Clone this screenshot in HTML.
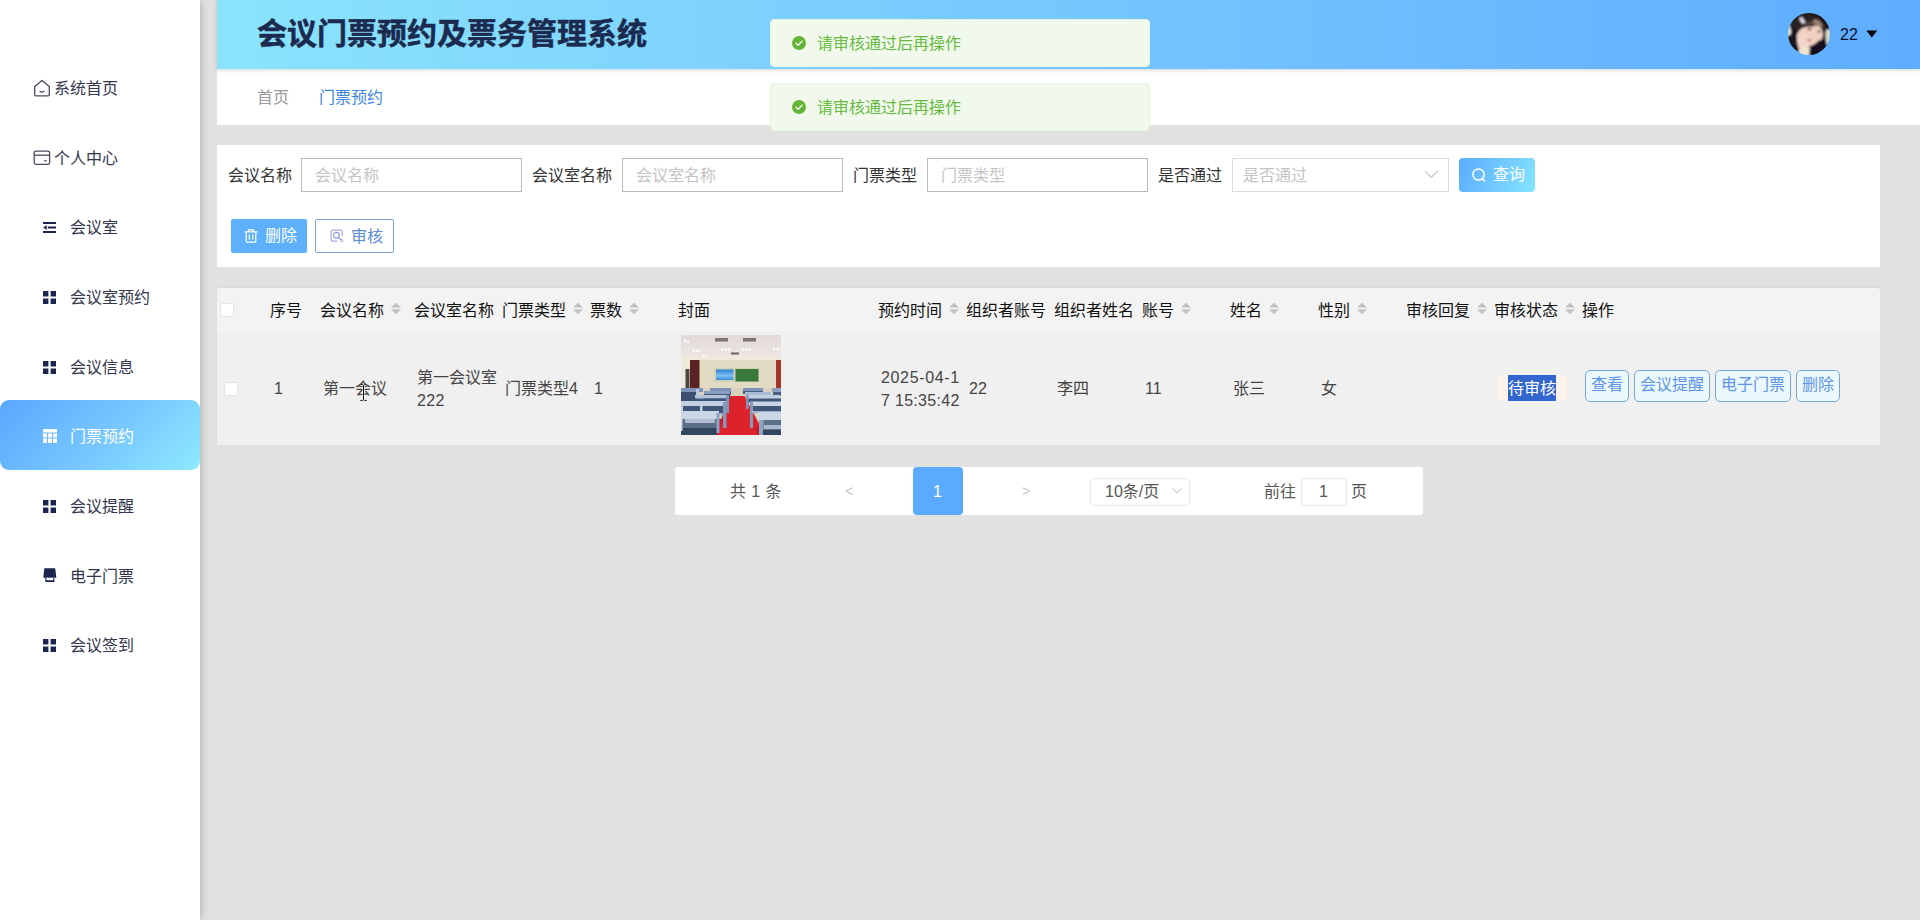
<!DOCTYPE html>
<html lang="zh-CN">
<head>
<meta charset="utf-8">
<title>会议门票预约及票务管理系统</title>
<style>
*{box-sizing:border-box;margin:0;padding:0}
html,body{width:1920px;height:920px;overflow:hidden}
body{background:#e1e1e1;font-family:"Liberation Sans","Noto Sans CJK SC",sans-serif;font-size:16px;color:#333;position:relative}
.abs{position:absolute}
.t{position:absolute;white-space:nowrap;line-height:24px;height:24px;margin-top:1px}
/* sidebar */
#side{position:absolute;left:0;top:0;width:200px;height:920px;background:#fff;box-shadow:0 0 8px rgba(0,0,0,.28);z-index:3}
.mi{position:absolute;left:0;width:200px;height:70px}
.mi .t{color:#333}
#side svg{position:absolute}
#active{position:absolute;left:0;top:400px;width:200px;height:70px;border-radius:9px;background:linear-gradient(135deg,#5aa6ff 0%,#78c8ff 55%,#8ee9ff 100%)}
/* header */
#head{position:absolute;left:217px;top:0;width:1703px;height:69px;background:linear-gradient(90deg,#8ae4fc 0%,#7ed2fd 30%,#6cbcff 70%,#5eadff 100%);box-shadow:0 1px 4px rgba(0,0,0,.18);z-index:2}
#title{left:40px;top:13px;font-size:30px;font-weight:bold;-webkit-text-stroke:.5px #1b2a4e;color:#1b2a4e;line-height:40px;height:40px}
#crumb{position:absolute;left:217px;top:69px;width:1703px;height:56px;background:#fff}
/* toast */
.toast{z-index:10;position:absolute;left:770px;width:380px;height:48px;background:#f0f9eb;border:1px solid #e6f4de;border-radius:4px}
.toast .t{left:46px;top:11px;color:#69ba41}
.toast svg{position:absolute;left:21px;top:16px}
/* search */
#search{position:absolute;left:217px;top:145px;width:1663px;height:122px;background:#fff}
.lab{color:#333}
.inp{position:absolute;top:13px;height:34px;width:221px;border:1px solid #b9b9b9;background:#fff}
.inp .t{left:13px;top:4px;color:#c4c4c4}
.btn{position:absolute;height:34px;border-radius:4px}
/* table */
#table{position:absolute;left:217px;top:288px;width:1663px;height:157px;background:linear-gradient(#f3f3f3 0,#f3f3f3 42px,#f0f0f0 44px,#f0f0f0 100%);border-radius:3px 3px 0 0;box-shadow:0 -1px 2px rgba(0,0,0,.04)}
#table .h{color:#111;top:10px}
#table .d{color:#444;top:88px}
.sort{position:absolute;top:15px;width:8px;height:13px}
.sort:before,.sort:after{content:"";position:absolute;left:0;border:4px solid transparent}
.sort:before{top:-3px;border-bottom:5px solid #c8c8c8}
.sort:after{top:7px;border-top:5px solid #c8c8c8}
.cb{position:absolute;width:14px;height:14px;background:#fff;border:1px solid #e4e4e4;border-radius:2px}
.ob{position:absolute;top:82px;height:32px;border:1px solid #76a6dc;border-radius:5px;background:#ebf9ff;color:#5f95e6;text-align:center;line-height:28px;white-space:nowrap}
/* pager */
#pager{position:absolute;left:675px;top:467px;width:748px;height:48px;background:#fff;border-radius:3px}
#pager .t{color:#555}
</style>
</head>
<body>

<div id="head">
  <div class="t" id="title">会议门票预约及票务管理系统</div>
<svg class="abs" style="left:1571px;top:13px" width="42" height="42" viewBox="0 0 42 42">
    <defs><clipPath id="avc"><circle cx="21" cy="21" r="21"/></clipPath><filter id="ab" x="-10%" y="-10%" width="120%" height="120%"><feGaussianBlur stdDeviation="0.900"/></filter></defs>
    <g clip-path="url(#avc)"><g filter="url(#ab)">
      <rect x="-3" y="-3" width="48" height="48" fill="#1a1517"/>
      <path d="M-2 10l6 0l1 10l-7 4z" fill="#e6e4e2"/>
      <path d="M37 17l6-1v15l-5 1z" fill="#d9d8c9"/>
      <path d="M12 13q6-4 14-2q8 2 9 9q0 8-6 11q-6 4-12 1q-7-4-7-11q0-5 2-8z" fill="#f0cfc1"/>
      <path d="M9 20q4-4 8-2l5 10q-2 6-1 10l-9 0q-4-8-3-18z" fill="#f3d6c9"/>
      <path d="M11 35.500l11-1.500l0 10H10z" fill="#eee5d3"/>
      <path d="M5 9q7-10 20-7q12 3 13 15l-2 10q-1-12-5-15q-6 2-13 2q-6 1-8 6q-3 3-3 8q-3-9-7-19z" fill="#2b2123"/>
      <path d="M3 12q3 2 6 8q-2 10 2 18l-8 2z" fill="#18121a"/>
      <path d="M27 6q6 1 8 8l-6-1q-3-3-6-3z" fill="#9a8272"/>
      <path d="M17 9q5-1 9 1l-6 3z" fill="#5a4848"/>
      <path d="M11 5.500l3-1.500l3.500 5.500l-3 1.500z" fill="#e8e6f3"/>
      <path d="M22 33q6-2 9-6l7 0l2 18H21z" fill="#14101a"/>
      <ellipse cx="21.500" cy="16.200" rx="1.900" ry="1.100" fill="#4a2c2c"/><ellipse cx="31" cy="18.600" rx="1.600" ry="1" fill="#4a2c2c"/>
      <ellipse cx="21" cy="27.300" rx="2.300" ry="1.300" fill="#d67a7c"/>
    </g></g>
  </svg>
  <div class="t" style="left:1623px;top:22px;color:#0a1030">22</div>
  <svg class="abs" style="left:1649px;top:30px" width="12" height="8" viewBox="0 0 12 8"><path d="M0.3 0.5h11L5.8 7.6z" fill="#050510"/></svg>
</div>

<div id="crumb">
  <div class="t" style="left:40px;top:16px;color:#999">首页</div>
  <div class="t" style="left:102px;top:16px;color:#4088de">门票预约</div>
</div>

<div id="side">
  <div id="active"></div>
  <svg width="18" height="18" viewBox="0 0 18 18" style="left:33px;top:79px"><path d="M1.700 7.600L9 1.400l7.300 6.200v8a1.200 1.200 0 0 1-1.200 1.200H2.900a1.200 1.200 0 0 1-1.200-1.200z" fill="none" stroke="#4a4a5e" stroke-width="1.300" stroke-linejoin="round"/><path d="M7 12.300q2 1.500 4 0" fill="none" stroke="#4a4a5e" stroke-width="1.200" stroke-linecap="round"/></svg>
  <div class="t" style="left:54px;top:76px;color:#33364d">系统首页</div>
  <svg width="18" height="16" viewBox="0 0 18 16" style="left:33px;top:150px"><rect x="1.200" y="1.100" width="15.400" height="13.200" rx="1.600" fill="none" stroke="#4a4a5e" stroke-width="1.300"/><path d="M1.200 5.200h15.400" stroke="#4a4a5e" stroke-width="1.300"/><path d="M11 10.800h2.800" stroke="#4a4a5e" stroke-width="1.200"/></svg>
  <div class="t" style="left:54px;top:146px;color:#33364d">个人中心</div>
  <svg width="13" height="11" viewBox="0 0 13 11" style="left:43px;top:222px"><path d="M0 0h13v2H0zM4.700 4.500H13v2H4.700zM0 9h13v2H0zM3.600 3v5L0.200 5.500z" fill="#1c2550"/></svg>
  <div class="t" style="left:70px;top:215px;color:#33364d">会议室</div>
  <svg width="13" height="13" viewBox="0 0 13 13" style="left:43px;top:291px"><path d="M0 0h5.4v5.4H0zM7.6 0H13v5.4H7.6zM0 7.6h5.4V13H0zM7.6 7.6H13V13H7.6z" fill="#1c2550"/></svg>
  <div class="t" style="left:70px;top:285px;color:#33364d">会议室预约</div>
  <svg width="13" height="13" viewBox="0 0 13 13" style="left:43px;top:361px"><path d="M0 0h5.4v5.4H0zM7.6 0H13v5.4H7.6zM0 7.6h5.4V13H0zM7.6 7.6H13V13H7.6z" fill="#1c2550"/></svg>
  <div class="t" style="left:70px;top:355px;color:#33364d">会议信息</div>
  <svg width="14" height="14" viewBox="0 0 14 14" style="left:43px;top:429px"><path d="M0 0h14v3.6H0zM0 4.6h4v4H0zM5 4.6h4v4H5zM10 4.6h4v4h-4zM0 9.6h4V14H0zM5 9.6h4V14H5zM10 9.6h4V14h-4z" fill="#fff"/></svg>
  <div class="t" style="left:70px;top:424px;color:#fff">门票预约</div>
  <svg width="13" height="13" viewBox="0 0 13 13" style="left:43px;top:500px"><path d="M0 0h5.4v5.4H0zM7.6 0H13v5.4H7.6zM0 7.6h5.4V13H0zM7.6 7.6H13V13H7.6z" fill="#1c2550"/></svg>
  <div class="t" style="left:70px;top:494px;color:#33364d">会议提醒</div>
  <svg width="14" height="14" viewBox="0 0 14 14" style="left:43px;top:568px"><path d="M1.300 0.300h10.900l1.100 9q-1.100 1.300-2.200 0q-1.050 1.300-2.100 0q-1.100 1.300-2.200 0q-1.050 1.300-2.100 0q-1.100 1.300-2.200 0q-1.100 1.300-2.200 0z" fill="#1c2550"/><path d="M2.300 9.800v4.100h9.100V9.800h-1.100v2.400H3.400V9.800z" fill="#1c2550"/></svg>
  <div class="t" style="left:70px;top:564px;color:#33364d">电子门票</div>
  <svg width="13" height="13" viewBox="0 0 13 13" style="left:43px;top:639px"><path d="M0 0h5.4v5.4H0zM7.6 0H13v5.4H7.6zM0 7.6h5.4V13H0zM7.6 7.6H13V13H7.6z" fill="#1c2550"/></svg>
  <div class="t" style="left:70px;top:633px;color:#33364d">会议签到</div>
</div>

<div id="search">
  <div class="t lab" style="left:11px;top:18px">会议名称</div>
  <div class="inp" style="left:84px"><div class="t">会议名称</div></div>
  <div class="t lab" style="left:315px;top:18px">会议室名称</div>
  <div class="inp" style="left:405px"><div class="t">会议室名称</div></div>
  <div class="t lab" style="left:636px;top:18px">门票类型</div>
  <div class="inp" style="left:710px"><div class="t">门票类型</div></div>
  <div class="t lab" style="left:941px;top:18px">是否通过</div>
  <div class="inp" style="left:1015px;width:217px;border-color:#dbdbdb"><div class="t" style="left:10px">是否通过</div>
    <svg class="abs" style="left:191px;top:11px" width="15" height="10" viewBox="0 0 15 10"><path d="M1 1.200l6.300 6.300l6.300-6.300" fill="none" stroke="#c0c4cc" stroke-width="1.200"/></svg>
  </div>
  <div class="btn" style="left:1242px;top:13px;width:76px;background:linear-gradient(115deg,#5aacff,#86e4fe)">
    <svg class="abs" style="left:12px;top:9px" width="16" height="16" viewBox="0 0 16 16"><circle cx="7.500" cy="7.500" r="5.600" fill="none" stroke="#fff" stroke-width="1.500"/><path d="M11.500 11.800l2.200 2.200" stroke="#fff" stroke-width="1.500" stroke-linecap="round"/></svg>
    <div class="t" style="left:34px;top:4px;color:#fff">查询</div>
  </div>
  <div class="btn" style="left:14px;top:74px;width:76px;background:#5eb0fb;border-radius:2px">
    <svg class="abs" style="left:12px;top:9px" width="16" height="16" viewBox="0 0 16 16"><path d="M1.500 3.800h13M5.500 3.600V1.800h5v1.800M3.200 4v9.200a1 1 0 0 0 1 1h7.600a1 1 0 0 0 1-1V4M6.300 6.500v5.300M9.700 6.500v5.300" fill="none" stroke="#fff" stroke-width="1.200"/></svg>
    <div class="t" style="left:34px;top:4px;color:#fff">删除</div>
  </div>
  <div class="btn" style="left:98px;top:74px;width:79px;background:#fff;border:1px solid #7ea6dd;border-radius:2px">
    <svg class="abs" style="left:13px;top:8px" width="16" height="16" viewBox="0 0 16 16"><path d="M13.200 7.500V3.800a1.700 1.700 0 0 0-1.700-1.700H3.800a1.700 1.700 0 0 0-1.700 1.700v7.700a1.700 1.700 0 0 0 1.700 1.700h4.400" fill="none" stroke="#a9a6e2" stroke-width="1.200"/><circle cx="7.400" cy="7.300" r="2.900" fill="none" stroke="#8d9be6" stroke-width="1.200"/><path d="M9.600 9.600l2.300 2.300" stroke="#8d9be6" stroke-width="1.200"/><circle cx="12.700" cy="12.700" r="1.200" fill="none" stroke="#a9a6e2" stroke-width="1"/></svg>
    <div class="t" style="left:35px;top:4px;color:#5a8cd8">审核</div>
  </div>
</div>
<div id="table">
  <div class="cb" style="left:3px;top:15px"></div>
  <div class="cb" style="left:7px;top:94px"></div>
  <div class="t h" style="left:53px">序号</div>
  <div class="t h" style="left:103px">会议名称</div>
  <svg class="abs" style="left:174px;top:14px" width="10" height="13" viewBox="0 0 10 13"><path d="M0 5.500L5 0.500l5 5zM0 7.200h10l-5 5z" fill="#c2c2c2"/></svg>
  <div class="t h" style="left:197px">会议室名称</div>
  <div class="t h" style="left:285px">门票类型</div>
  <svg class="abs" style="left:356px;top:14px" width="10" height="13" viewBox="0 0 10 13"><path d="M0 5.500L5 0.500l5 5zM0 7.200h10l-5 5z" fill="#c2c2c2"/></svg>
  <div class="t h" style="left:373px">票数</div>
  <svg class="abs" style="left:412px;top:14px" width="10" height="13" viewBox="0 0 10 13"><path d="M0 5.500L5 0.500l5 5zM0 7.200h10l-5 5z" fill="#c2c2c2"/></svg>
  <div class="t h" style="left:461px">封面</div>
  <div class="t h" style="left:661px">预约时间</div>
  <svg class="abs" style="left:732px;top:14px" width="10" height="13" viewBox="0 0 10 13"><path d="M0 5.500L5 0.500l5 5zM0 7.200h10l-5 5z" fill="#c2c2c2"/></svg>
  <div class="t h" style="left:749px">组织者账号</div>
  <div class="t h" style="left:837px">组织者姓名</div>
  <div class="t h" style="left:925px">账号</div>
  <svg class="abs" style="left:964px;top:14px" width="10" height="13" viewBox="0 0 10 13"><path d="M0 5.500L5 0.500l5 5zM0 7.200h10l-5 5z" fill="#c2c2c2"/></svg>
  <div class="t h" style="left:1013px">姓名</div>
  <svg class="abs" style="left:1052px;top:14px" width="10" height="13" viewBox="0 0 10 13"><path d="M0 5.500L5 0.500l5 5zM0 7.200h10l-5 5z" fill="#c2c2c2"/></svg>
  <div class="t h" style="left:1101px">性别</div>
  <svg class="abs" style="left:1140px;top:14px" width="10" height="13" viewBox="0 0 10 13"><path d="M0 5.500L5 0.500l5 5zM0 7.200h10l-5 5z" fill="#c2c2c2"/></svg>
  <div class="t h" style="left:1189px">审核回复</div>
  <svg class="abs" style="left:1260px;top:14px" width="10" height="13" viewBox="0 0 10 13"><path d="M0 5.500L5 0.500l5 5zM0 7.200h10l-5 5z" fill="#c2c2c2"/></svg>
  <div class="t h" style="left:1277px">审核状态</div>
  <svg class="abs" style="left:1348px;top:14px" width="10" height="13" viewBox="0 0 10 13"><path d="M0 5.500L5 0.500l5 5zM0 7.200h10l-5 5z" fill="#c2c2c2"/></svg>
  <div class="t h" style="left:1365px">操作</div>
  <div class="t d" style="left:57px;top:88px">1</div>
  <div class="t d" style="left:106px;top:88px">第一会议</div>
  <div class="t d" style="left:200px;top:77px">第一会议室</div>
  <div class="t d" style="left:200px;top:100px;letter-spacing:.4px">222</div>
  <div class="t d" style="left:288px;top:88px">门票类型4</div>
  <div class="t d" style="left:377px;top:88px">1</div>
  <div class="t d" style="left:664px;top:77px;letter-spacing:.65px">2025-04-1</div>
  <div class="t d" style="left:664px;top:100px;letter-spacing:.3px">7 15:35:42</div>
  <div class="t d" style="left:752px;top:88px">22</div>
  <div class="t d" style="left:840px;top:88px">李四</div>
  <div class="t d" style="left:928px;top:88px">11</div>
  <div class="t d" style="left:1016px;top:88px">张三</div>
  <div class="t d" style="left:1104px;top:88px">女</div>
  <svg class="abs" style="left:143px;top:96px" width="7" height="17" viewBox="0 0 7 17"><path d="M0.300 0.600h2.400l0.800 0.700l0.800-0.700h2.400M3.500 1.200v14.600M0.300 16.400h2.400l0.800-0.700l0.800 0.700h2.400" fill="none" stroke="#fff" stroke-width="2.200" opacity=".7"/><path d="M0.300 0.600h2.400l0.800 0.700l0.800-0.700h2.400M3.500 1.200v14.600M0.300 16.400h2.400l0.800-0.700l0.800 0.700h2.400" fill="none" stroke="#111" stroke-width="1"/></svg>
  <svg id="room" class="abs" style="left:464px;top:47px" width="100" height="100" viewBox="0 0 100 100">
    <defs>
      <linearGradient id="ceil" x1="0" y1="0" x2="0" y2="1"><stop offset="0" stop-color="#e2d9da"/><stop offset="1" stop-color="#eee8e2"/></linearGradient>
      <linearGradient id="scr" x1="0" y1="0" x2="0" y2="1"><stop offset="0" stop-color="#2f7fd8"/><stop offset="0.600" stop-color="#7ec0f0"/><stop offset="1" stop-color="#3a8ad8"/></linearGradient>
      <filter id="bl"><feGaussianBlur stdDeviation="0.500"/></filter>
    </defs>
    <g filter="url(#bl)">
    <rect width="100" height="100" fill="#e3dac4"/>
    <rect width="100" height="25" fill="url(#ceil)"/>
    <rect x="0" y="21" width="100" height="4" fill="#efe9dc"/>
    <rect x="34" y="3" width="13" height="3.500" fill="#7d7474"/><rect x="62" y="3" width="13" height="3.500" fill="#7d7474"/>
    <rect x="50" y="17.500" width="8" height="2" fill="#6a6262"/>
    <g fill="#fff"><circle cx="4" cy="5.500" r="1.300"/><circle cx="7" cy="7" r="1.300"/><circle cx="13" cy="15.500" r="1.200"/><circle cx="16" cy="15.800" r="1.200"/><circle cx="19" cy="16" r="1.200"/><circle cx="22" cy="21" r="1"/><circle cx="25" cy="21" r="1"/><circle cx="41" cy="14.500" r="1.200"/><circle cx="44.500" cy="14.500" r="1.200"/><circle cx="48" cy="14.500" r="1.200"/><circle cx="62" cy="14.500" r="1.200"/><circle cx="65.500" cy="14.500" r="1.200"/><circle cx="69" cy="14.500" r="1.200"/><circle cx="93" cy="14" r="1.200"/><circle cx="97" cy="14" r="1.200"/></g>
    <rect x="0" y="22" width="9" height="32" fill="#efeadc"/>
    <rect x="4.500" y="34" width="4" height="19" fill="#4a4a40"/>
    <rect x="9" y="25" width="9.500" height="28" fill="#5a2422"/>
    <rect x="95" y="25" width="5" height="28" fill="#a2382a"/>
    <rect x="33" y="32.500" width="45" height="14.500" fill="#cfd3b8"/>
    <rect x="35" y="34.500" width="17.500" height="10.500" fill="url(#scr)"/>
    <rect x="54.500" y="34" width="23" height="12.500" fill="#39783a"/>
    <rect x="0" y="53" width="100" height="47" fill="#d9d2c0"/>
    <path d="M49 61h14.500L84 100H34z" fill="#dc2029"/>
    <path d="M36 100L42 84h-6v16zM77 100l-3-8h6v8z" fill="#c41d27"/>
    <!-- left desks -->
    <g>
      <rect x="29" y="53" width="21" height="3" fill="#7d94b8"/><rect x="29" y="56" width="21" height="4" fill="#465e82"/>
      <rect x="23" y="56" width="26" height="3" fill="#8aa0c2"/><rect x="23" y="59" width="26" height="5" fill="#40587c"/>
      <rect x="0" y="53" width="22" height="4" fill="#7f96ba"/><rect x="0" y="57" width="18" height="9" fill="#3c5070"/><rect x="15" y="54" width="3" height="12" fill="#b9c6dc"/>
      <rect x="14" y="60" width="33" height="3.500" fill="#b4c3da"/><rect x="14" y="63.500" width="33" height="5.500" fill="#3d5478"/><rect x="45" y="60" width="3" height="18" fill="#7f96ba"/>
      <rect x="0" y="66" width="45" height="5" fill="#c3cfe2"/><rect x="0" y="71" width="42" height="7" fill="#3f5678"/><rect x="0" y="71" width="2" height="7" fill="#c3cfe2"/><rect x="19" y="71" width="2.500" height="7" fill="#c3cfe2"/><rect x="0" y="78" width="42" height="2" fill="#9fb1cf"/><rect x="42" y="67" width="3.500" height="26" fill="#8298bc"/>
      <rect x="0" y="76" width="38" height="8" fill="#cbd6e6"/><rect x="0" y="84" width="36" height="10" fill="#5a6e88"/><rect x="4" y="84" width="30" height="4" fill="#b0bccf"/><rect x="0" y="93" width="36" height="7" fill="#33465f"/><rect x="35.500" y="78" width="3" height="20" fill="#8ea3c4"/><rect x="0" y="84" width="1.500" height="12" fill="#cbd6e6"/>
    </g>
    <!-- right desks -->
    <g>
      <rect x="62" y="53" width="20" height="3" fill="#7d94b8"/><rect x="62" y="56" width="20" height="3" fill="#465e82"/>
      <rect x="91" y="53" width="9" height="4" fill="#8aa0c2"/><rect x="92" y="57" width="8" height="4" fill="#4a5f88"/>
      <rect x="64" y="57" width="26" height="3" fill="#a9bad4"/><rect x="65" y="60" width="25" height="3" fill="#40587c"/>
      <rect x="66" y="60" width="33" height="3.500" fill="#c3cfe2"/><rect x="67" y="63.500" width="33" height="4" fill="#3d5478"/><rect x="65" y="60" width="2.500" height="14" fill="#7f96ba"/>
      <rect x="69" y="66.500" width="31" height="4.500" fill="#c9d4e5"/><rect x="71" y="71" width="29" height="5" fill="#3f5678"/><rect x="69" y="67" width="3" height="26" fill="#8298bc"/><rect x="71" y="76" width="29" height="2" fill="#9fb1cf"/>
      <rect x="77" y="77" width="23" height="8" fill="#cbd6e6"/><rect x="82" y="85" width="18" height="10" fill="#5a7088"/><rect x="83" y="90" width="17" height="4" fill="#aab8cc"/><rect x="78" y="85" width="4.500" height="15" fill="#8ea3c4"/><rect x="82" y="95" width="18" height="5" fill="#33465f"/>
    </g>
    </g>
  </svg>
  <div class="abs" style="left:1280px;top:87px;width:70px;height:25px;background:#fcf4ec"></div>
  <div class="abs" style="left:1291px;top:87px;width:48px;height:26px;background:#3466cf"></div>
  <div class="t" style="left:1291px;top:88px;color:#fff">待审核</div>
  <div class="ob" style="left:1368px;width:44px">查看</div>
  <div class="ob" style="left:1417px;width:76px">会议提醒</div>
  <div class="ob" style="left:1498px;width:76px">电子门票</div>
  <div class="ob" style="left:1579px;width:44px">删除</div>
</div>
<div id="pager">
  <div class="t" style="left:55px;top:12px;word-spacing:.8px">共 1 条</div>
  <div class="t" style="left:170px;top:11px;color:#c6cad0;font-size:14px">&lt;</div>
  <div class="abs" style="left:238px;top:0;width:50px;height:48px;background:#5aabff;border-radius:4px"></div>
  <div class="t" style="left:258px;top:12px;color:#fff">1</div>
  <div class="t" style="left:347px;top:11px;color:#c6cad0;font-size:14px">&gt;</div>
  <div class="abs" style="left:415px;top:11px;width:100px;height:28px;border:1px solid #e8eaee;border-radius:3px"></div>
  <div class="t" style="left:430px;top:12px">10条/页</div>
  <svg class="abs" style="left:496px;top:20px" width="12" height="8" viewBox="0 0 12 8"><path d="M1.500 1.500l4.500 4.500l4.500-4.500" fill="none" stroke="#d0d3d8" stroke-width="1.100"/></svg>
  <div class="t" style="left:589px;top:12px">前往</div>
  <div class="abs" style="left:626px;top:11px;width:46px;height:28px;border:1px solid #e8eaee;border-radius:3px"></div>
  <div class="t" style="left:644px;top:12px">1</div>
  <div class="t" style="left:676px;top:12px">页</div>
</div>

<div class="toast" style="top:19px"><svg width="14" height="14" viewBox="0 0 14 14"><circle cx="7" cy="7" r="7" fill="#63b437"/><path d="M4 7.300l2.100 2.100l3.900-4.100" fill="none" stroke="#fff" stroke-width="1.300" stroke-linecap="round" stroke-linejoin="round"/></svg><div class="t">请审核通过后再操作</div></div>
<div class="toast" style="top:83px"><svg width="14" height="14" viewBox="0 0 14 14"><circle cx="7" cy="7" r="7" fill="#63b437"/><path d="M4 7.300l2.100 2.100l3.900-4.100" fill="none" stroke="#fff" stroke-width="1.300" stroke-linecap="round" stroke-linejoin="round"/></svg><div class="t">请审核通过后再操作</div></div>

</body>
</html>
